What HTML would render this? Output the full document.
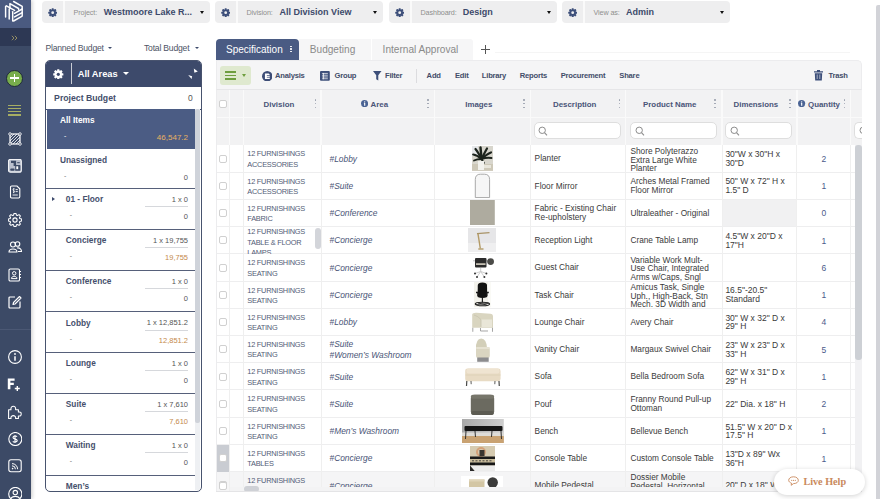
<!DOCTYPE html><html><head><meta charset='utf-8'><style>
*{box-sizing:border-box;margin:0;padding:0}
html,body{width:880px;height:499px;overflow:hidden;background:#fff;font-family:"Liberation Sans",sans-serif;color:#3d4a6b}
.abs{position:absolute}
.sb{position:absolute;left:0;top:0;width:31px;height:499px;background:#3c4a66;box-shadow:1px 0 4px rgba(0,0,0,.22)}
.pill{position:absolute;top:1px;height:22px;width:168px;background:#eeeeef;border-radius:4px}
.pill .gd{position:absolute;left:21px;top:0;width:1.5px;height:22px;background:#fafafa}
.pill .lab{position:absolute;top:7.3px;font-size:7.2px;letter-spacing:-0.1px;color:#8e8e8e;white-space:nowrap}
.pill .val{position:absolute;top:5.5px;font-size:9px;font-weight:bold;color:#3d4a6b;white-space:nowrap}
.pill .car{position:absolute;top:9.8px;width:0;height:0;border-left:2.8px solid transparent;border-right:2.8px solid transparent;border-top:3.3px solid #111}
.t{position:absolute;white-space:nowrap}
.row{position:absolute;left:216px;width:646px;height:27.3px;border-bottom:1px solid #ececec;background:#fff}
.cell{position:absolute;top:0;height:100%;border-right:1px solid #ececec}
.div{font-size:7.4px;color:#525c76;line-height:10.4px;letter-spacing:-0.25px}
.area{font-size:8.4px;font-style:italic;color:#4a5577;line-height:10.5px}
.desc{font-size:8.3px;color:#3a3a3a;line-height:8.9px}
.dm{font-size:8.5px}
.qty{font-size:8.5px;color:#4a5a8a}
.chk{position:absolute;width:8px;height:8px;border:1px solid #d0d0d0;border-radius:2px;background:#fff}
.prow{position:absolute;left:46px;width:149px;border-bottom:1px solid #3d4a6b}
.pn{position:absolute;font-size:8.3px;font-weight:bold;color:#444e6b;white-space:nowrap}
.pm{position:absolute;font-size:7.2px;color:#555;white-space:nowrap;text-align:right}
</style></head><body><div class='sb'><div class='abs' style='left:0;top:0;width:31px;height:28px;background:#4a5a80'></div><div class='abs' style='left:0;top:28px;width:31px;height:17.5px;background:#2d3854'></div><svg class='abs' style='left:0;top:0' width='31' height='28' viewBox='0 0 31 28'>
<g fill='none' stroke='#fff' stroke-width='1.45' stroke-linecap='round' stroke-linejoin='round'>
<path d='M5.6 16.9 V6.6 L6.4 5.8 L14.6 10.4'/>
<path d='M9.2 19 V9 L10 8.4 L9.9 3.6 L18.6 8.5 V9.5'/>
<path d='M12.7 21 V11.6'/>
<path d='M13.6 1.5 L22.2 6.4 V16.1 L13.6 21'/>
<path d='M14.5 13.3 L22.2 9'/>
<path d='M14.5 16.9 L22.2 12.6'/>
</g></svg><svg class='abs' style='left:11px;top:34.8px' width='7.5' height='6' viewBox='0 0 7.5 6'><path d='M.8 .8 L3 3 L.8 5.2 M3.8 .8 L6 3 L3.8 5.2' fill='none' stroke='#948d63' stroke-width='1'/></svg><div class='abs' style='left:6px;top:69.5px;width:17px;height:17px;border-radius:50%;background:#78ad4c;border:1px solid #1f283b'></div><div class='abs' style='left:10.2px;top:77.3px;width:8.6px;height:1.4px;background:#fff'></div><div class='abs' style='left:13.8px;top:73.7px;width:1.4px;height:8.6px;background:#fff'></div><div class='abs' style='left:8px;top:104.5px;width:13px;height:1.3px;background:#a6ad63'></div><div class='abs' style='left:8px;top:107.8px;width:13px;height:1.3px;background:#a6ad63'></div><div class='abs' style='left:8px;top:111px;width:13px;height:1.3px;background:#a6ad63'></div><div class='abs' style='left:8px;top:114.3px;width:13px;height:1.3px;background:#a6ad63'></div><svg class='abs' style='left:7.5px;top:131.7px' width='14' height='14' viewBox='0 0 14 14'><rect x='2' y='2' width='10' height='10' fill='none' stroke='#fff' stroke-width='1.2'/><path d='M2 6 L6 2 M2 9 L9 2 M2 12 L12 2 M5 12 L12 5 M8 12 L12 8' stroke='#fff' stroke-width='.8'/><circle cx='2' cy='2' r='1.3' fill='#3c4a66' stroke='#fff' stroke-width='.8'/><circle cx='12' cy='2' r='1.3' fill='#3c4a66' stroke='#fff' stroke-width='.8'/><circle cx='2' cy='12' r='1.3' fill='#3c4a66' stroke='#fff' stroke-width='.8'/><circle cx='12' cy='12' r='1.3' fill='#3c4a66' stroke='#fff' stroke-width='.8'/></svg><svg class='abs' style='left:7.5px;top:158.7px' width='14' height='14' viewBox='0 0 14 14'><rect x='0.5' y='0.3' width='12.8' height='12.9' rx='2' fill='#b9bfcd'/><rect x='0.5' y='0.3' width='12.8' height='12.9' rx='2' fill='none' stroke='#f0f1f4' stroke-width='1.2'/><path d='M3 1.7 H8.1 V6.9 H5.6 V4 H3 Z' fill='#3c4a66'/><rect x='9.2' y='3.2' width='2.6' height='1' fill='#3c4a66'/><rect x='7.2' y='6.1' width='5.2' height='5.7' rx='.6' fill='#3c4a66'/><rect x='8.3' y='7.3' width='1.9' height='2.9' fill='#fff'/><rect x='2.2' y='9.6' width='4.4' height='2.1' rx='1' fill='#3c4a66'/></svg><svg class='abs' style='left:7.5px;top:185.1px' width='14' height='14' viewBox='0 0 14 14'><path d='M2.5 2.2 Q2.5 1 3.7 1 H9 L11.8 3.8 V11.8 Q11.8 13 10.6 13 H3.7 Q2.5 13 2.5 11.8 Z' fill='none' stroke='#fff' stroke-width='1.1'/><path d='M6.2 3.6 C5 3.6 4.6 5.2 5.6 5.6 C6.8 6 6.6 7.6 5.2 7.5 M5.8 3 V8.2' fill='none' stroke='#fff' stroke-width='.8'/><path d='M7.6 4.6 H9.8 M7.6 6.6 H9.8 M4.6 10 H9.8' stroke='#fff' stroke-width='.9'/></svg><svg class='abs' style='left:7.5px;top:212.8px' width='14' height='14' viewBox='0 0 14 14'><path d='M11.78 5.54 L13.63 6.06 L13.63 7.94 L11.78 8.46 L11.42 9.35 L12.36 11.02 L11.02 12.36 L9.35 11.42 L8.46 11.78 L7.94 13.63 L6.06 13.63 L5.54 11.78 L4.65 11.42 L2.98 12.36 L1.64 11.02 L2.58 9.35 L2.22 8.46 L0.37 7.94 L0.37 6.06 L2.22 5.54 L2.58 4.65 L1.64 2.98 L2.98 1.64 L4.65 2.58 L5.54 2.22 L6.06 0.37 L7.94 0.37 L8.46 2.22 L9.35 2.58 L11.02 1.64 L12.36 2.98 L11.42 4.65 Z' fill='none' stroke='#fff' stroke-width='1.05' stroke-linejoin='round'/><circle cx='7' cy='7' r='2.1' fill='none' stroke='#fff' stroke-width='1.1'/></svg><svg class='abs' style='left:7.5px;top:240.2px' width='14' height='14' viewBox='0 0 14 14'><circle cx='5' cy='4.5' r='2.5' fill='none' stroke='#fff' stroke-width='1.1'/><circle cx='9.5' cy='4' r='2.3' fill='none' stroke='#fff' stroke-width='1.1'/><path d='M1 12 C1 8 9 8 9 12 Z M9 8 C11 7.5 13.5 8.5 13.5 11.5 L10 11.5' fill='none' stroke='#fff' stroke-width='1.1'/></svg><svg class='abs' style='left:7.5px;top:267.9px' width='14' height='14' viewBox='0 0 14 14'><rect x='1' y='1' width='10.5' height='12' rx='1.3' fill='none' stroke='#fff' stroke-width='1.1'/><circle cx='6.2' cy='5.3' r='1.7' fill='none' stroke='#fff' stroke-width='1'/><path d='M3.4 10.6 C3.4 7.6 9 7.6 9 10.6 Z' fill='none' stroke='#fff' stroke-width='1'/><path d='M11.5 3.5 H13 M11.5 6.5 H13 M11.5 9.5 H13' stroke='#fff' stroke-width='1'/></svg><svg class='abs' style='left:7.5px;top:295.0px' width='14' height='14' viewBox='0 0 14 14'><path d='M12 6.5 V12 Q12 13 11 13 H2 Q1 13 1 12 V3 Q1 2 2 2 H7' fill='none' stroke='#fff' stroke-width='1.2'/><path d='M5 9.5 L5.5 7.5 L11.5 1.5 L13 3 L7 9 Z' fill='none' stroke='#fff' stroke-width='1.1' stroke-linejoin='round'/></svg><svg class='abs' style='left:7.5px;top:350.3px' width='14' height='14' viewBox='0 0 14 14'><circle cx='7' cy='7' r='6.4' fill='none' stroke='#fff' stroke-width='1.1'/><path d='M7 6.2 V10.8' stroke='#fff' stroke-width='1.5'/><circle cx='7' cy='4' r='.9' fill='#fff'/></svg><svg class='abs' style='left:7.5px;top:404.5px' width='14' height='14' viewBox='0 0 14 14'><path d='M0.6 13.6 V4.8 H3 C2.6 2.2 4 1.2 5.3 1.2 C6.6 1.2 8 2.2 7.6 4.8 H10.4 V7 C12.8 6.6 13.2 8 13.2 9 C13.2 10 12.8 11.4 10.4 11 V13.6 H7.6 C8 11.4 6.6 10.6 5.3 10.6 C4 10.6 2.6 11.4 3 13.6 Z' fill='none' stroke='#fff' stroke-width='1.1' stroke-linejoin='round'/></svg><svg class='abs' style='left:7.5px;top:432.0px' width='14' height='14' viewBox='0 0 14 14'><circle cx='7.3' cy='7' r='6.5' fill='none' stroke='#fff' stroke-width='1.1'/><path d='M9 4.6 C8.5 3.8 5 3.5 5 5.4 C5 7.3 9.2 6.5 9.2 8.6 C9.2 10.5 5.6 10.3 4.8 9.3 M7 3 V11' fill='none' stroke='#fff' stroke-width='1.1'/></svg><svg class='abs' style='left:7.5px;top:459.0px' width='14' height='14' viewBox='0 0 14 14'><rect x='0.8' y='0.7' width='12.4' height='12' rx='2.2' fill='none' stroke='#fff' stroke-width='1.1'/><path d='M4 4.6 A5.6 5.6 0 0 1 9.6 10.2 M4 6.8 A3.4 3.4 0 0 1 7.4 10.2' fill='none' stroke='#fff' stroke-width='1'/><circle cx='4.6' cy='9.6' r='.8' fill='#fff'/></svg><svg class='abs' style='left:7.5px;top:487.0px' width='14' height='14' viewBox='0 0 14 14'><circle cx='7.3' cy='7' r='6.6' fill='none' stroke='#fff' stroke-width='1.1'/><circle cx='7.3' cy='5.6' r='2.2' fill='none' stroke='#fff' stroke-width='1.1'/><path d='M3 11.6 C4 8.6 10.6 8.6 11.6 11.6' fill='none' stroke='#fff' stroke-width='1.1'/></svg><svg class='abs' style='left:0;top:370px' width='31' height='25' viewBox='0 370 31 25'><path d='M7.8 389.3 V378.5 H14.6 V380.8 H10.4 V382.8 H13.8 V385 H10.4 V389.3 Z' fill='#fff'/><path d='M17.3 386 V391 M14.8 388.5 H19.8' stroke='#fff' stroke-width='1.4'/></svg><div class='abs' style='left:0;top:329px;width:31px;height:1px;background:#4b5874'></div></div><div class='pill' style='left:42px'><svg class='abs' style='left:5.9px;top:6.6px' width='9.4' height='9.4' viewBox='0 0 10 10'><rect x='3.9' y='0.2' width='2.2' height='2.4' rx='.5' fill='#3d4f7a' transform='rotate(0 5 5)'/><rect x='3.9' y='0.2' width='2.2' height='2.4' rx='.5' fill='#3d4f7a' transform='rotate(45 5 5)'/><rect x='3.9' y='0.2' width='2.2' height='2.4' rx='.5' fill='#3d4f7a' transform='rotate(90 5 5)'/><rect x='3.9' y='0.2' width='2.2' height='2.4' rx='.5' fill='#3d4f7a' transform='rotate(135 5 5)'/><rect x='3.9' y='0.2' width='2.2' height='2.4' rx='.5' fill='#3d4f7a' transform='rotate(180 5 5)'/><rect x='3.9' y='0.2' width='2.2' height='2.4' rx='.5' fill='#3d4f7a' transform='rotate(225 5 5)'/><rect x='3.9' y='0.2' width='2.2' height='2.4' rx='.5' fill='#3d4f7a' transform='rotate(270 5 5)'/><rect x='3.9' y='0.2' width='2.2' height='2.4' rx='.5' fill='#3d4f7a' transform='rotate(315 5 5)'/><circle cx='5' cy='5' r='3.5' fill='#3d4f7a'/><circle cx='5' cy='5' r='1.5' fill='#eeeeef'/></svg><div class='gd'></div><div class='lab' style='left:31.5px'>Project:</div><div class='val' style='left:61.75px'>Westmoore Lake R...</div><div class='car' style='left:157.5px'></div></div><div class='pill' style='left:215px'><svg class='abs' style='left:5.9px;top:6.6px' width='9.4' height='9.4' viewBox='0 0 10 10'><rect x='3.9' y='0.2' width='2.2' height='2.4' rx='.5' fill='#3d4f7a' transform='rotate(0 5 5)'/><rect x='3.9' y='0.2' width='2.2' height='2.4' rx='.5' fill='#3d4f7a' transform='rotate(45 5 5)'/><rect x='3.9' y='0.2' width='2.2' height='2.4' rx='.5' fill='#3d4f7a' transform='rotate(90 5 5)'/><rect x='3.9' y='0.2' width='2.2' height='2.4' rx='.5' fill='#3d4f7a' transform='rotate(135 5 5)'/><rect x='3.9' y='0.2' width='2.2' height='2.4' rx='.5' fill='#3d4f7a' transform='rotate(180 5 5)'/><rect x='3.9' y='0.2' width='2.2' height='2.4' rx='.5' fill='#3d4f7a' transform='rotate(225 5 5)'/><rect x='3.9' y='0.2' width='2.2' height='2.4' rx='.5' fill='#3d4f7a' transform='rotate(270 5 5)'/><rect x='3.9' y='0.2' width='2.2' height='2.4' rx='.5' fill='#3d4f7a' transform='rotate(315 5 5)'/><circle cx='5' cy='5' r='3.5' fill='#3d4f7a'/><circle cx='5' cy='5' r='1.5' fill='#eeeeef'/></svg><div class='gd'></div><div class='lab' style='left:31.5px'>Division:</div><div class='val' style='left:64.60000000000002px'>All Division View</div><div class='car' style='left:157.5px'></div></div><div class='pill' style='left:389px'><svg class='abs' style='left:5.9px;top:6.6px' width='9.4' height='9.4' viewBox='0 0 10 10'><rect x='3.9' y='0.2' width='2.2' height='2.4' rx='.5' fill='#3d4f7a' transform='rotate(0 5 5)'/><rect x='3.9' y='0.2' width='2.2' height='2.4' rx='.5' fill='#3d4f7a' transform='rotate(45 5 5)'/><rect x='3.9' y='0.2' width='2.2' height='2.4' rx='.5' fill='#3d4f7a' transform='rotate(90 5 5)'/><rect x='3.9' y='0.2' width='2.2' height='2.4' rx='.5' fill='#3d4f7a' transform='rotate(135 5 5)'/><rect x='3.9' y='0.2' width='2.2' height='2.4' rx='.5' fill='#3d4f7a' transform='rotate(180 5 5)'/><rect x='3.9' y='0.2' width='2.2' height='2.4' rx='.5' fill='#3d4f7a' transform='rotate(225 5 5)'/><rect x='3.9' y='0.2' width='2.2' height='2.4' rx='.5' fill='#3d4f7a' transform='rotate(270 5 5)'/><rect x='3.9' y='0.2' width='2.2' height='2.4' rx='.5' fill='#3d4f7a' transform='rotate(315 5 5)'/><circle cx='5' cy='5' r='3.5' fill='#3d4f7a'/><circle cx='5' cy='5' r='1.5' fill='#eeeeef'/></svg><div class='gd'></div><div class='lab' style='left:31.5px'>Dashboard:</div><div class='val' style='left:73.80000000000001px'>Design</div><div class='car' style='left:157.5px'></div></div><div class='pill' style='left:562px'><svg class='abs' style='left:5.9px;top:6.6px' width='9.4' height='9.4' viewBox='0 0 10 10'><rect x='3.9' y='0.2' width='2.2' height='2.4' rx='.5' fill='#3d4f7a' transform='rotate(0 5 5)'/><rect x='3.9' y='0.2' width='2.2' height='2.4' rx='.5' fill='#3d4f7a' transform='rotate(45 5 5)'/><rect x='3.9' y='0.2' width='2.2' height='2.4' rx='.5' fill='#3d4f7a' transform='rotate(90 5 5)'/><rect x='3.9' y='0.2' width='2.2' height='2.4' rx='.5' fill='#3d4f7a' transform='rotate(135 5 5)'/><rect x='3.9' y='0.2' width='2.2' height='2.4' rx='.5' fill='#3d4f7a' transform='rotate(180 5 5)'/><rect x='3.9' y='0.2' width='2.2' height='2.4' rx='.5' fill='#3d4f7a' transform='rotate(225 5 5)'/><rect x='3.9' y='0.2' width='2.2' height='2.4' rx='.5' fill='#3d4f7a' transform='rotate(270 5 5)'/><rect x='3.9' y='0.2' width='2.2' height='2.4' rx='.5' fill='#3d4f7a' transform='rotate(315 5 5)'/><circle cx='5' cy='5' r='3.5' fill='#3d4f7a'/><circle cx='5' cy='5' r='1.5' fill='#eeeeef'/></svg><div class='gd'></div><div class='lab' style='left:31.5px'>View as:</div><div class='val' style='left:63.89999999999998px'>Admin</div><div class='car' style='left:157.5px'></div></div><div class='t' style='left:45.4px;top:43px;font-size:8.6px;letter-spacing:-0.2px;color:#4d5466'>Planned Budget</div><div class='abs' style='left:108px;top:47.2px;width:0;height:0;border-left:2.3px solid transparent;border-right:2.3px solid transparent;border-top:2.6px solid #3d4a6b'></div><div class='t' style='left:144px;top:43px;font-size:8.6px;letter-spacing:-0.2px;color:#4d5466'>Total Budget</div><div class='abs' style='left:195px;top:47.2px;width:0;height:0;border-left:2.3px solid transparent;border-right:2.3px solid transparent;border-top:2.6px solid #3d4a6b'></div><div class='abs' style='left:45px;top:59.8px;width:157px;height:432px;border:1.5px solid #48536e;border-radius:5px;overflow:hidden;background:#fff'><div class='abs' style='left:0;top:0;width:157px;height:26px;background:#3d4a6b'></div></div><svg class='abs' style='left:53.4px;top:68.5px' width='10.6' height='10.6' viewBox='0 0 10 10'><rect x='3.9' y='0.2' width='2.2' height='2.4' rx='.5' fill='#fff' transform='rotate(0 5 5)'/><rect x='3.9' y='0.2' width='2.2' height='2.4' rx='.5' fill='#fff' transform='rotate(45 5 5)'/><rect x='3.9' y='0.2' width='2.2' height='2.4' rx='.5' fill='#fff' transform='rotate(90 5 5)'/><rect x='3.9' y='0.2' width='2.2' height='2.4' rx='.5' fill='#fff' transform='rotate(135 5 5)'/><rect x='3.9' y='0.2' width='2.2' height='2.4' rx='.5' fill='#fff' transform='rotate(180 5 5)'/><rect x='3.9' y='0.2' width='2.2' height='2.4' rx='.5' fill='#fff' transform='rotate(225 5 5)'/><rect x='3.9' y='0.2' width='2.2' height='2.4' rx='.5' fill='#fff' transform='rotate(270 5 5)'/><rect x='3.9' y='0.2' width='2.2' height='2.4' rx='.5' fill='#fff' transform='rotate(315 5 5)'/><circle cx='5' cy='5' r='3.5' fill='#fff'/><circle cx='5' cy='5' r='1.5' fill='#3d4a6b'/></svg><div class='abs' style='left:71.3px;top:62.5px;width:1.2px;height:21px;background:#c9ccd4'></div><div class='t' style='left:77.7px;top:68.5px;font-size:9.3px;font-weight:bold;color:#fff'>All Areas</div><div class='abs' style='left:122.5px;top:72.2px;width:0;height:0;border-left:3px solid transparent;border-right:3px solid transparent;border-top:3.2px solid #fff'></div><svg class='abs' style='left:180px;top:60px' width='24' height='28' viewBox='180 60 24 28'><polygon points='193.8,68.6 197.8,71.6 194.4,72.8' fill='#fff'/><polygon points='188.2,74.9 192.1,76.2 191.6,79' fill='#fff'/></svg><div class='pn' style='left:54.1px;top:92.5px;font-size:8.7px'>Project Budget</div><div class='t' style='left:188px;top:92.5px;font-size:8.5px;color:#555'>0</div><div class='abs' style='left:46px;top:108.5px;width:155px;height:1px;background:#3d4a6b'></div><div class='abs' style='left:46.5px;top:109px;width:148px;height:40px;background:#4b5c84'></div><div class='abs' style='left:195px;top:109px;width:5px;height:381px;background:#eef0f3'></div><div class='abs' style='left:195px;top:109px;width:5px;height:314px;background:#cfd3da;border-radius:2px'></div><div class='pn' style='left:60px;top:115px;color:#fff'>All Items</div><div class='t' style='left:64px;top:132px;font-size:7px;color:#fff'>-</div><div class='t' style='right:692px;top:133px;font-size:8px;color:#e8b263'>46,547.2</div><div class='pn' style='left:60px;top:155px;color:#454f6c'>Unassigned</div><div class='t' style='left:64px;top:172px;font-size:7px;color:#777'>-</div><div class='t' style='right:692px;top:173px;font-size:7.5px;color:#555'>0</div><div class='abs' style='left:46px;top:187.79999999999998px;width:149px;height:1.2px;background:#56607a'></div><div class='pn' style='left:65.8px;top:194.2px;color:#454f6c'>01 - Floor</div><div class='abs' style='left:52px;top:197.2px;width:0;height:0;border-top:2.5px solid transparent;border-bottom:2.5px solid transparent;border-left:3px solid #3d4a6b'></div><div class='t' style='left:69.8px;top:211.2px;font-size:7px;color:#777'>-</div><div class='t' style='right:692px;top:212.2px;font-size:7.5px;color:#555'>0</div><div class='t' style='right:692px;top:194.7px;font-size:7.5px;color:#555'>1 x 0</div><div class='abs' style='left:145px;top:206.2px;width:43px;height:1px;background:#d6d8dc'></div><div class='abs' style='left:46px;top:228.6px;width:149px;height:1.2px;background:#56607a'></div><div class='pn' style='left:65.8px;top:235px;color:#454f6c'>Concierge</div><div class='t' style='left:69.8px;top:252px;font-size:7px;color:#777'>-</div><div class='t' style='right:692px;top:253px;font-size:7.5px;color:#c48a4c'>19,755</div><div class='t' style='right:692px;top:235.5px;font-size:7.5px;color:#555'>1 x 19,755</div><div class='abs' style='left:145px;top:247px;width:43px;height:1px;background:#d6d8dc'></div><div class='abs' style='left:46px;top:269.70000000000005px;width:149px;height:1.2px;background:#56607a'></div><div class='pn' style='left:65.8px;top:276.1px;color:#454f6c'>Conference</div><div class='t' style='left:69.8px;top:293.1px;font-size:7px;color:#777'>-</div><div class='t' style='right:692px;top:294.1px;font-size:7.5px;color:#555'>0</div><div class='t' style='right:692px;top:276.6px;font-size:7.5px;color:#555'>1 x 0</div><div class='abs' style='left:145px;top:288.1px;width:43px;height:1px;background:#d6d8dc'></div><div class='abs' style='left:46px;top:311.1px;width:149px;height:1.2px;background:#56607a'></div><div class='pn' style='left:65.8px;top:317.5px;color:#454f6c'>Lobby</div><div class='t' style='left:69.8px;top:334.5px;font-size:7px;color:#777'>-</div><div class='t' style='right:692px;top:335.5px;font-size:7.5px;color:#c48a4c'>12,851.2</div><div class='t' style='right:692px;top:318.0px;font-size:7.5px;color:#555'>1 x 12,851.2</div><div class='abs' style='left:145px;top:329.5px;width:43px;height:1px;background:#d6d8dc'></div><div class='abs' style='left:46px;top:351.8px;width:149px;height:1.2px;background:#56607a'></div><div class='pn' style='left:65.8px;top:358.2px;color:#454f6c'>Lounge</div><div class='t' style='left:69.8px;top:375.2px;font-size:7px;color:#777'>-</div><div class='t' style='right:692px;top:376.2px;font-size:7.5px;color:#555'>0</div><div class='t' style='right:692px;top:358.7px;font-size:7.5px;color:#555'>1 x 0</div><div class='abs' style='left:145px;top:370.2px;width:43px;height:1px;background:#d6d8dc'></div><div class='abs' style='left:46px;top:392.8px;width:149px;height:1.2px;background:#56607a'></div><div class='pn' style='left:65.8px;top:399.2px;color:#454f6c'>Suite</div><div class='t' style='left:69.8px;top:416.2px;font-size:7px;color:#777'>-</div><div class='t' style='right:692px;top:417.2px;font-size:7.5px;color:#c48a4c'>7,610</div><div class='t' style='right:692px;top:399.7px;font-size:7.5px;color:#555'>1 x 7,610</div><div class='abs' style='left:145px;top:411.2px;width:43px;height:1px;background:#d6d8dc'></div><div class='abs' style='left:46px;top:433.90000000000003px;width:149px;height:1.2px;background:#56607a'></div><div class='pn' style='left:65.8px;top:440.3px;color:#454f6c'>Waiting</div><div class='t' style='left:69.8px;top:457.3px;font-size:7px;color:#777'>-</div><div class='t' style='right:692px;top:458.3px;font-size:7.5px;color:#555'>0</div><div class='t' style='right:692px;top:440.8px;font-size:7.5px;color:#555'>1 x 0</div><div class='abs' style='left:145px;top:452.3px;width:43px;height:1px;background:#d6d8dc'></div><div class='abs' style='left:46px;top:474.6px;width:149px;height:1.2px;background:#56607a'></div><div class='pn' style='left:65.8px;top:481px;color:#454f6c'>Men’s</div><div class='abs' style='left:216px;top:38.7px;width:83px;height:21.5px;background:#4a5b83;border-radius:4px 4px 0 0'></div><div class='t' style='left:226px;top:44px;font-size:10px;color:#fff'>Specification</div><div class='abs' style='left:290.3px;top:45.5px;width:1.5px;height:1.5px;background:#fff;border-radius:50%'></div><div class='abs' style='left:290.3px;top:48.1px;width:1.5px;height:1.5px;background:#fff;border-radius:50%'></div><div class='abs' style='left:290.3px;top:50.7px;width:1.5px;height:1.5px;background:#fff;border-radius:50%'></div><div class='abs' style='left:299px;top:38.7px;width:72.4px;height:21.5px;background:#f6f6f7'></div><div class='t' style='left:309.8px;top:44.3px;font-size:10.1px;color:#8a8a8a'>Budgeting</div><div class='abs' style='left:372.4px;top:38.7px;width:101px;height:21.5px;background:#f6f6f7;border-radius:0 3px 0 0'></div><div class='t' style='left:382.6px;top:44.3px;font-size:10.1px;color:#8a8a8a'>Internal Approval</div><div class='abs' style='left:481px;top:49px;width:8.6px;height:1.1px;background:#555'></div><div class='abs' style='left:484.75px;top:45.3px;width:1.1px;height:8.6px;background:#555'></div><div class='abs' style='left:495px;top:51.5px;width:355px;height:1px;background:#f5f5f5'></div><div class='abs' style='left:216px;top:60.2px;width:645.6px;height:30px;background:#f5f5f6;border:1px solid #ececee;border-bottom:1px solid #e6e6e8;border-radius:0 5px 0 0'></div><div class='abs' style='left:220px;top:65.8px;width:31px;height:19px;background:#dfe9cf;border-radius:3px'></div><div class='abs' style='left:224.5px;top:71.2px;width:11.5px;height:1.7px;background:#6e9e3e'></div><div class='abs' style='left:224.5px;top:74.8px;width:11.5px;height:1.7px;background:#6e9e3e'></div><div class='abs' style='left:224.5px;top:78.4px;width:11.5px;height:1.7px;background:#6e9e3e'></div><div class='abs' style='left:241.5px;top:74px;width:0;height:0;border-left:2.7px solid transparent;border-right:2.7px solid transparent;border-top:3px solid #6e9e3e'></div><svg class='abs' style='left:261.8px;top:70.5px' width='10.5' height='10.5' viewBox='0 0 10 10'><circle cx='5' cy='5' r='5' fill='#3d4d76'/><path d='M2.8 2.4 H6.3 L7.4 3.5 V7.6 H2.8 Z' fill='#fff'/><path d='M4.6 4.3 H7.6 M4.6 6 H7.6' stroke='#3d4d76' stroke-width='.7'/></svg><div class='t' style='left:275px;font-size:7.6px;letter-spacing:-0.2px;font-weight:bold;color:#434d69;top:70.6px'>Analysis</div><svg class='abs' style='left:320.2px;top:70.8px' width='9.8' height='9.8' viewBox='0 0 10 10'><rect x='0' y='0' width='10' height='10' rx='1' fill='#3d4f7a'/><path d='M2 2.5 H8 M2 4.3 H8 M2 6.1 H8 M2 7.9 H8 M3.6 2 V8.5' stroke='#fff' stroke-width='.7'/></svg><div class='t' style='left:334.5px;font-size:7.6px;letter-spacing:-0.2px;font-weight:bold;color:#434d69;top:70.6px'>Group</div><svg class='abs' style='left:373px;top:71px' width='8.5' height='9.5' viewBox='0 0 9 10'><path d='M0 0 H9 L5.6 4.5 V10 L3.4 8.8 V4.5 Z' fill='#3d4f7a'/></svg><div class='t' style='left:385px;font-size:7.6px;letter-spacing:-0.2px;font-weight:bold;color:#434d69;top:70.6px'>Filter</div><div class='abs' style='left:415.5px;top:68.5px;width:1px;height:14px;background:#dcdcdf'></div><div class='t' style='left:426.6px;font-size:7.6px;letter-spacing:-0.2px;font-weight:bold;color:#434d69;top:70.6px'>Add</div><div class='t' style='left:455px;font-size:7.6px;letter-spacing:-0.2px;font-weight:bold;color:#434d69;top:70.6px'>Edit</div><div class='t' style='left:481.8px;font-size:7.6px;letter-spacing:-0.2px;font-weight:bold;color:#434d69;top:70.6px'>Library</div><div class='t' style='left:519.8px;font-size:7.6px;letter-spacing:-0.2px;font-weight:bold;color:#434d69;top:70.6px'>Reports</div><div class='t' style='left:560.7px;font-size:7.6px;letter-spacing:-0.2px;font-weight:bold;color:#434d69;top:70.6px'>Procurement</div><div class='t' style='left:619.3px;font-size:7.6px;letter-spacing:-0.2px;font-weight:bold;color:#434d69;top:70.6px'>Share</div><svg class='abs' style='left:814px;top:70px' width='9' height='10.5' viewBox='0 0 9 10.5'><path d='M0 1.3 H9 V2.6 H0 Z M3 0 H6 V1.3 H3 Z M.8 3.2 H8.2 L7.8 10.5 H1.2 Z' fill='#3d4f7a'/><path d='M3.2 4.5 V9 M5.8 4.5 V9' stroke='#f5f5f6' stroke-width='.6'/></svg><div class='t' style='left:828.4px;font-size:7.6px;letter-spacing:-0.2px;font-weight:bold;color:#434d69;top:70.6px'>Trash</div><div class='abs' style='left:216px;top:90px;width:645.6px;height:55.400000000000006px;background:#f2f2f3'></div><div class='abs' style='left:216px;top:116.6px;width:645.6px;height:1.5px;background:#fafafa'></div><div class='abs' style='left:228.95px;top:90px;width:1.5px;height:55.400000000000006px;background:#fafafa'></div><div class='abs' style='left:242.65px;top:90px;width:1.5px;height:55.400000000000006px;background:#fafafa'></div><div class='abs' style='left:320.35px;top:90px;width:1.5px;height:55.400000000000006px;background:#fafafa'></div><div class='abs' style='left:433.85px;top:90px;width:1.5px;height:55.400000000000006px;background:#fafafa'></div><div class='abs' style='left:529.95px;top:90px;width:1.5px;height:55.400000000000006px;background:#fafafa'></div><div class='abs' style='left:624.55px;top:90px;width:1.5px;height:55.400000000000006px;background:#fafafa'></div><div class='abs' style='left:721.25px;top:90px;width:1.5px;height:55.400000000000006px;background:#fafafa'></div><div class='abs' style='left:796.05px;top:90px;width:1.5px;height:55.400000000000006px;background:#fafafa'></div><div class='abs' style='left:849.95px;top:90px;width:1.5px;height:55.400000000000006px;background:#fafafa'></div><div class='chk' style='left:218.5px;top:100.3px'></div><div class='t' style='left:263.6px;font-size:7.9px;font-weight:bold;color:#4a5578;top:99.6px'>Division</div><div class='abs' style='left:314.9px;top:99.0px;width:1.6px;height:1.6px;border-radius:50%;background:#9aa0ae'></div><div class='abs' style='left:314.9px;top:102.9px;width:1.6px;height:1.6px;border-radius:50%;background:#9aa0ae'></div><div class='abs' style='left:314.9px;top:106.8px;width:1.6px;height:1.6px;border-radius:50%;background:#9aa0ae'></div><svg class='abs' style='left:360.7px;top:100.2px' width='7.2' height='7.2' viewBox='0 0 7 7'><circle cx='3.5' cy='3.5' r='3.5' fill='#4a6394'/><path d='M3.6 3 V5.7' stroke='#fff' stroke-width='1.1'/><path d='M2.8 3.1 H3.9' stroke='#fff' stroke-width='.7'/><circle cx='3.6' cy='1.8' r='.6' fill='#fff'/></svg><div class='t' style='left:370.5px;font-size:7.9px;font-weight:bold;color:#4a5578;top:99.6px'>Area</div><div class='abs' style='left:427.4px;top:99.0px;width:1.6px;height:1.6px;border-radius:50%;background:#9aa0ae'></div><div class='abs' style='left:427.4px;top:102.9px;width:1.6px;height:1.6px;border-radius:50%;background:#9aa0ae'></div><div class='abs' style='left:427.4px;top:106.8px;width:1.6px;height:1.6px;border-radius:50%;background:#9aa0ae'></div><div class='t' style='left:465.2px;font-size:7.9px;font-weight:bold;color:#4a5578;top:99.6px'>Images</div><div class='abs' style='left:523.1px;top:99.0px;width:1.6px;height:1.6px;border-radius:50%;background:#9aa0ae'></div><div class='abs' style='left:523.1px;top:102.9px;width:1.6px;height:1.6px;border-radius:50%;background:#9aa0ae'></div><div class='abs' style='left:523.1px;top:106.8px;width:1.6px;height:1.6px;border-radius:50%;background:#9aa0ae'></div><div class='t' style='left:553px;font-size:7.9px;font-weight:bold;color:#4a5578;top:99.6px'>Description</div><div class='abs' style='left:618.6px;top:99.0px;width:1.6px;height:1.6px;border-radius:50%;background:#9aa0ae'></div><div class='abs' style='left:618.6px;top:102.9px;width:1.6px;height:1.6px;border-radius:50%;background:#9aa0ae'></div><div class='abs' style='left:618.6px;top:106.8px;width:1.6px;height:1.6px;border-radius:50%;background:#9aa0ae'></div><div class='t' style='left:643px;font-size:7.9px;font-weight:bold;color:#4a5578;top:99.6px'>Product Name</div><div class='abs' style='left:714.2px;top:99.0px;width:1.6px;height:1.6px;border-radius:50%;background:#9aa0ae'></div><div class='abs' style='left:714.2px;top:102.9px;width:1.6px;height:1.6px;border-radius:50%;background:#9aa0ae'></div><div class='abs' style='left:714.2px;top:106.8px;width:1.6px;height:1.6px;border-radius:50%;background:#9aa0ae'></div><div class='t' style='left:733.5px;font-size:7.9px;font-weight:bold;color:#4a5578;top:99.6px'>Dimensions</div><div class='abs' style='left:789.2px;top:99.0px;width:1.6px;height:1.6px;border-radius:50%;background:#9aa0ae'></div><div class='abs' style='left:789.2px;top:102.9px;width:1.6px;height:1.6px;border-radius:50%;background:#9aa0ae'></div><div class='abs' style='left:789.2px;top:106.8px;width:1.6px;height:1.6px;border-radius:50%;background:#9aa0ae'></div><svg class='abs' style='left:798.4px;top:100.2px' width='7.2' height='7.2' viewBox='0 0 7 7'><circle cx='3.5' cy='3.5' r='3.5' fill='#4a6394'/><path d='M3.6 3 V5.7' stroke='#fff' stroke-width='1.1'/><path d='M2.8 3.1 H3.9' stroke='#fff' stroke-width='.7'/><circle cx='3.6' cy='1.8' r='.6' fill='#fff'/></svg><div class='t' style='left:808px;font-size:7.9px;font-weight:bold;color:#4a5578;top:99.6px'>Quantity</div><div class='abs' style='left:843.8000000000001px;top:99.0px;width:1.6px;height:1.6px;border-radius:50%;background:#9aa0ae'></div><div class='abs' style='left:843.8000000000001px;top:102.9px;width:1.6px;height:1.6px;border-radius:50%;background:#9aa0ae'></div><div class='abs' style='left:843.8000000000001px;top:106.8px;width:1.6px;height:1.6px;border-radius:50%;background:#9aa0ae'></div><div class='abs' style='left:533.5px;top:122.4px;width:87.70000000000005px;height:17px;background:#fff;border:1px solid #dedede;border-radius:5px'><svg class='abs' style='left:3.8px;top:2.9px' width='10' height='10' viewBox='0 0 10 10'><circle cx='4.2' cy='4.3' r='3.2' fill='none' stroke='#8c8c8c' stroke-width='1'/><path d='M6.5 6.7 L9 9.3' stroke='#8c8c8c' stroke-width='1.1'/></svg></div><div class='abs' style='left:629.8px;top:122.4px;width:87.0px;height:17px;background:#fff;border:1px solid #dedede;border-radius:5px'><svg class='abs' style='left:3.8px;top:2.9px' width='10' height='10' viewBox='0 0 10 10'><circle cx='4.2' cy='4.3' r='3.2' fill='none' stroke='#8c8c8c' stroke-width='1'/><path d='M6.5 6.7 L9 9.3' stroke='#8c8c8c' stroke-width='1.1'/></svg></div><div class='abs' style='left:725px;top:122.4px;width:67px;height:17px;background:#fff;border:1px solid #dedede;border-radius:5px'><svg class='abs' style='left:3.8px;top:2.9px' width='10' height='10' viewBox='0 0 10 10'><circle cx='4.2' cy='4.3' r='3.2' fill='none' stroke='#8c8c8c' stroke-width='1'/><path d='M6.5 6.7 L9 9.3' stroke='#8c8c8c' stroke-width='1.1'/></svg></div><div class='abs' style='left:854.3px;top:122.4px;width:7.3px;height:17px;background:#fff;border:1px solid #dedede;border-right:none;border-radius:5px 0 0 5px;overflow:hidden'><svg class='abs' style='left:3.8px;top:2.9px' width='10' height='10' viewBox='0 0 10 10'><circle cx='4.2' cy='4.3' r='3.2' fill='none' stroke='#8c8c8c' stroke-width='1'/><path d='M6.5 6.7 L9 9.3' stroke='#8c8c8c' stroke-width='1.1'/></svg></div><div class='abs' style='left:216px;top:145.4px;width:645.6px;height:346.1px;overflow:hidden;background:#fff'><div class='abs' style='left:0;top:0.0px;width:645.6px;height:27.23px;overflow:hidden'><div class='abs' style='left:0;top:26.23px;width:645.6px;height:1px;background:#eeeeef'></div><div class='abs' style='left:13.199999999999989px;top:0;width:1px;height:27.23px;background:#efefef'></div><div class='abs' style='left:26.900000000000006px;top:0;width:1px;height:27.23px;background:#efefef'></div><div class='abs' style='left:104.60000000000002px;top:0;width:1px;height:27.23px;background:#efefef'></div><div class='abs' style='left:218.10000000000002px;top:0;width:1px;height:27.23px;background:#efefef'></div><div class='abs' style='left:314.20000000000005px;top:0;width:1px;height:27.23px;background:#efefef'></div><div class='abs' style='left:408.79999999999995px;top:0;width:1px;height:27.23px;background:#efefef'></div><div class='abs' style='left:505.5px;top:0;width:1px;height:27.23px;background:#efefef'></div><div class='abs' style='left:580.3px;top:0;width:1px;height:27.23px;background:#efefef'></div><div class='abs' style='left:634.2px;top:0;width:1px;height:27.23px;background:#efefef'></div><div class='chk' style='left:3.2px;top:9.315000000000001px'></div><div class='t div' style='left:31.30000000000001px;top:4.015000000000001px;line-height:10.4px'>12 FURNISHINGS<br>ACCESSORIES</div><div class='t area' style='left:113.5px;top:8.365px;line-height:10.5px'>#Lobby</div><div class='t desc' style='left:318.6px;top:9.065000000000001px;line-height:9.1px'>Planter</div><div class='t desc' style='left:414.4px;top:1.3149999999999995px;line-height:8.8px'>Shore Polyterazzo<br>Extra Large White<br>Planter</div><div class='t desc dm' style='left:509.4px;top:4.8149999999999995px;line-height:8.8px'>30&quot;W x 30&quot;H x<br>30&quot;D</div><div class='t qty' style='left:605.5px;top:8.615px'>2</div><svg class='abs' style='left:255.8px;top:0.5999999999999943px' width='21.2' height='24.8' viewBox='0 0 21.2 24.8'><rect width='21.2' height='24.8' fill='#d8d6cd'/><rect width='6' height='10' fill='#e6e8ea'/><rect x='0' y='18' width='21.2' height='6.8' fill='#cdc8b8'/><g stroke='#1d241d' stroke-linecap='round' fill='none'><path d='M9.5 13 Q5 9 1.2 8.5' stroke-width='2.2'/><path d='M9.5 13 Q6 6 3.5 3' stroke-width='2.2'/><path d='M9.5 13 Q9 6 8.5 1.5' stroke-width='2.4'/><path d='M9.5 13 Q13 6 15 2.5' stroke-width='2.2'/><path d='M9.5 13 Q15 8 19 6.5' stroke-width='2.2'/><path d='M9.5 13 Q15 11 19.5 12' stroke-width='2'/><path d='M9.5 13 Q5 13 2 14.5' stroke-width='1.8'/><path d='M9.5 13 L12 17' stroke-width='1.6'/></g><rect x='6' y='15' width='6' height='9' fill='#f2f2ee'/><rect x='12' y='19' width='7' height='3' fill='#e8e6dc'/></svg></div><div class='abs' style='left:0;top:27.23px;width:645.6px;height:27.23px;overflow:hidden'><div class='abs' style='left:0;top:26.23px;width:645.6px;height:1px;background:#eeeeef'></div><div class='abs' style='left:13.199999999999989px;top:0;width:1px;height:27.23px;background:#efefef'></div><div class='abs' style='left:26.900000000000006px;top:0;width:1px;height:27.23px;background:#efefef'></div><div class='abs' style='left:104.60000000000002px;top:0;width:1px;height:27.23px;background:#efefef'></div><div class='abs' style='left:218.10000000000002px;top:0;width:1px;height:27.23px;background:#efefef'></div><div class='abs' style='left:314.20000000000005px;top:0;width:1px;height:27.23px;background:#efefef'></div><div class='abs' style='left:408.79999999999995px;top:0;width:1px;height:27.23px;background:#efefef'></div><div class='abs' style='left:505.5px;top:0;width:1px;height:27.23px;background:#efefef'></div><div class='abs' style='left:580.3px;top:0;width:1px;height:27.23px;background:#efefef'></div><div class='abs' style='left:634.2px;top:0;width:1px;height:27.23px;background:#efefef'></div><div class='chk' style='left:3.2px;top:9.315000000000001px'></div><div class='t div' style='left:31.30000000000001px;top:4.015000000000001px;line-height:10.4px'>12 FURNISHINGS<br>ACCESSORIES</div><div class='t area' style='left:113.5px;top:8.365px;line-height:10.5px'>#Suite</div><div class='t desc' style='left:318.6px;top:9.065000000000001px;line-height:9.1px'>Floor Mirror</div><div class='t desc' style='left:414.4px;top:4.8149999999999995px;line-height:8.8px'>Arches Metal Framed<br>Floor Mirror</div><div class='t desc dm' style='left:509.4px;top:4.8149999999999995px;line-height:8.8px'>50&quot; W x 72&quot; H x<br>1.5&quot; D</div><div class='t qty' style='left:605.5px;top:8.615px'>1</div><svg class='abs' style='left:257.75px;top:0.5699999999999825px' width='16.9' height='25.2' viewBox='0 0 16.9 25.2'><rect width='16.9' height='25.2' fill='#fff'/><path d='M1.3 24.6 V6.5 Q1.3 1.2 6.5 1.2 H10.4 Q15.6 1.2 15.6 6.5 V24.6 Z' fill='#f6f6f6' stroke='#a0a0a0' stroke-width='.9'/></svg></div><div class='abs' style='left:0;top:54.46px;width:645.6px;height:27.23px;overflow:hidden'><div class='abs' style='left:0;top:26.23px;width:645.6px;height:1px;background:#eeeeef'></div><div class='abs' style='left:506.5px;top:0;width:73.79999999999995px;height:26.23px;background:#f1f1f2'></div><div class='abs' style='left:13.199999999999989px;top:0;width:1px;height:27.23px;background:#efefef'></div><div class='abs' style='left:26.900000000000006px;top:0;width:1px;height:27.23px;background:#efefef'></div><div class='abs' style='left:104.60000000000002px;top:0;width:1px;height:27.23px;background:#efefef'></div><div class='abs' style='left:218.10000000000002px;top:0;width:1px;height:27.23px;background:#efefef'></div><div class='abs' style='left:314.20000000000005px;top:0;width:1px;height:27.23px;background:#efefef'></div><div class='abs' style='left:408.79999999999995px;top:0;width:1px;height:27.23px;background:#efefef'></div><div class='abs' style='left:505.5px;top:0;width:1px;height:27.23px;background:#efefef'></div><div class='abs' style='left:580.3px;top:0;width:1px;height:27.23px;background:#efefef'></div><div class='abs' style='left:634.2px;top:0;width:1px;height:27.23px;background:#efefef'></div><div class='chk' style='left:3.2px;top:9.315000000000001px'></div><div class='t div' style='left:31.30000000000001px;top:4.015000000000001px;line-height:10.4px'>12 FURNISHINGS<br>FABRIC</div><div class='t area' style='left:113.5px;top:8.365px;line-height:10.5px'>#Conference</div><div class='t desc' style='left:318.6px;top:4.515000000000001px;line-height:9.1px'>Fabric - Existing Chair<br>Re-upholstery</div><div class='t desc' style='left:414.4px;top:9.215px;line-height:8.8px'>Ultraleather - Original</div><div class='t qty' style='left:605.5px;top:8.615px'>0</div><svg class='abs' style='left:253.89999999999998px;top:0.23999999999998778px' width='24.8' height='25.2' viewBox='0 0 24.8 25.2'><rect width='24.8' height='25.2' fill='#aeab9f'/></svg></div><div class='abs' style='left:0;top:81.69px;width:645.6px;height:27.23px;overflow:hidden'><div class='abs' style='left:0;top:26.23px;width:645.6px;height:1px;background:#eeeeef'></div><div class='abs' style='left:13.199999999999989px;top:0;width:1px;height:27.23px;background:#efefef'></div><div class='abs' style='left:26.900000000000006px;top:0;width:1px;height:27.23px;background:#efefef'></div><div class='abs' style='left:104.60000000000002px;top:0;width:1px;height:27.23px;background:#efefef'></div><div class='abs' style='left:218.10000000000002px;top:0;width:1px;height:27.23px;background:#efefef'></div><div class='abs' style='left:314.20000000000005px;top:0;width:1px;height:27.23px;background:#efefef'></div><div class='abs' style='left:408.79999999999995px;top:0;width:1px;height:27.23px;background:#efefef'></div><div class='abs' style='left:505.5px;top:0;width:1px;height:27.23px;background:#efefef'></div><div class='abs' style='left:580.3px;top:0;width:1px;height:27.23px;background:#efefef'></div><div class='abs' style='left:634.2px;top:0;width:1px;height:27.23px;background:#efefef'></div><div class='chk' style='left:3.2px;top:9.315000000000001px'></div><div class='t div' style='left:31.30000000000001px;top:0.3149999999999977px;line-height:10.4px'>12 FURNISHINGS<br>TABLE &amp; FLOOR<br>LAMPS</div><div class='t area' style='left:113.5px;top:8.365px;line-height:10.5px'>#Concierge</div><div class='t desc' style='left:318.6px;top:9.065000000000001px;line-height:9.1px'>Reception Light</div><div class='t desc' style='left:414.4px;top:9.215px;line-height:8.8px'>Crane Table Lamp</div><div class='t desc dm' style='left:509.4px;top:4.8149999999999995px;line-height:8.8px'>4.5&quot;W x 20&quot;D x<br>17&quot;H</div><div class='t qty' style='left:605.5px;top:8.615px'>1</div><svg class='abs' style='left:252.2px;top:0.6099999999999852px' width='28.1' height='24.8' viewBox='0 0 28.1 24.8'><rect width='28.1' height='24.8' fill='#e6e6e8'/><rect y='15' width='28.1' height='9.8' fill='#efeff0'/><path d='M9 5.6 L21.5 4.6' stroke='#a99468' stroke-width='1.3' fill='none'/><path d='M10 5.8 L12.3 20.5' stroke='#b39a66' stroke-width='1.4' fill='none'/><path d='M10.3 21 L15.5 21' stroke='#b39a66' stroke-width='1.4'/></svg></div><div class='abs' style='left:0;top:108.92px;width:645.6px;height:27.23px;overflow:hidden'><div class='abs' style='left:0;top:26.23px;width:645.6px;height:1px;background:#eeeeef'></div><div class='abs' style='left:13.199999999999989px;top:0;width:1px;height:27.23px;background:#efefef'></div><div class='abs' style='left:26.900000000000006px;top:0;width:1px;height:27.23px;background:#efefef'></div><div class='abs' style='left:104.60000000000002px;top:0;width:1px;height:27.23px;background:#efefef'></div><div class='abs' style='left:218.10000000000002px;top:0;width:1px;height:27.23px;background:#efefef'></div><div class='abs' style='left:314.20000000000005px;top:0;width:1px;height:27.23px;background:#efefef'></div><div class='abs' style='left:408.79999999999995px;top:0;width:1px;height:27.23px;background:#efefef'></div><div class='abs' style='left:505.5px;top:0;width:1px;height:27.23px;background:#efefef'></div><div class='abs' style='left:580.3px;top:0;width:1px;height:27.23px;background:#efefef'></div><div class='abs' style='left:634.2px;top:0;width:1px;height:27.23px;background:#efefef'></div><div class='chk' style='left:3.2px;top:9.315000000000001px'></div><div class='t div' style='left:31.30000000000001px;top:4.015000000000001px;line-height:10.4px'>12 FURNISHINGS<br>SEATING</div><div class='t area' style='left:113.5px;top:8.365px;line-height:10.5px'>#Concierge</div><div class='t desc' style='left:318.6px;top:9.065000000000001px;line-height:9.1px'>Guest Chair</div><div class='t desc' style='left:414.4px;top:1.3149999999999995px;line-height:8.8px'>Variable Work Mult-<br>Use Chair, Integrated<br>Arms w/Caps, Sngl</div><div class='t qty' style='left:605.5px;top:8.615px'>6</div><svg class='abs' style='left:257px;top:2.8799999999999812px' width='20.5' height='21.6' viewBox='0 0 20.5 21.6'><rect width='20.5' height='21.6' fill='#fff'/><path d='M0 3.8 H15.5' stroke='#999' stroke-width='.6'/><rect x='2' y='1' width='11.5' height='9.5' rx='1' fill='#2b2b2b'/><rect x='3' y='6.3' width='9.5' height='1.6' fill='#d6d1c2'/><circle cx='17.6' cy='4.6' r='3.4' fill='#4b4b48'/><path d='M7.7 11 V14.5 M7.7 14.5 L2 16.5 M7.7 14.5 L13.4 16.5 M7.7 14.5 L4 20 M7.7 14.5 L11.4 20' stroke='#c8c8c8' stroke-width='.9'/><circle cx='2' cy='16.5' r='1' fill='#333'/><circle cx='13.4' cy='16.5' r='1' fill='#333'/><circle cx='4' cy='20' r='1' fill='#333'/><circle cx='11.4' cy='20' r='1' fill='#333'/></svg></div><div class='abs' style='left:0;top:136.15px;width:645.6px;height:27.23px;overflow:hidden'><div class='abs' style='left:0;top:26.23px;width:645.6px;height:1px;background:#eeeeef'></div><div class='abs' style='left:13.199999999999989px;top:0;width:1px;height:27.23px;background:#efefef'></div><div class='abs' style='left:26.900000000000006px;top:0;width:1px;height:27.23px;background:#efefef'></div><div class='abs' style='left:104.60000000000002px;top:0;width:1px;height:27.23px;background:#efefef'></div><div class='abs' style='left:218.10000000000002px;top:0;width:1px;height:27.23px;background:#efefef'></div><div class='abs' style='left:314.20000000000005px;top:0;width:1px;height:27.23px;background:#efefef'></div><div class='abs' style='left:408.79999999999995px;top:0;width:1px;height:27.23px;background:#efefef'></div><div class='abs' style='left:505.5px;top:0;width:1px;height:27.23px;background:#efefef'></div><div class='abs' style='left:580.3px;top:0;width:1px;height:27.23px;background:#efefef'></div><div class='abs' style='left:634.2px;top:0;width:1px;height:27.23px;background:#efefef'></div><div class='chk' style='left:3.2px;top:9.315000000000001px'></div><div class='t div' style='left:31.30000000000001px;top:4.015000000000001px;line-height:10.4px'>12 FURNISHINGS<br>SEATING</div><div class='t area' style='left:113.5px;top:8.365px;line-height:10.5px'>#Concierge</div><div class='t desc' style='left:318.6px;top:9.065000000000001px;line-height:9.1px'>Task Chair</div><div class='t desc' style='left:414.4px;top:1.3149999999999995px;line-height:8.8px'>Amicus Task, Single<br>Uph., High-Back, Stn<br>Mech. 3D Width and</div><div class='t desc dm' style='left:509.4px;top:4.8149999999999995px;line-height:8.8px'>16.5&quot;-20.5&quot;<br>Standard</div><div class='t qty' style='left:605.5px;top:8.615px'>1</div><svg class='abs' style='left:258.2px;top:0.9499999999999886px' width='16.8' height='25.2' viewBox='0 0 16.8 25.2'><rect width='16.8' height='25.2' fill='#f3f2ec'/><rect x='14' width='2.8' height='25.2' fill='#fbfbf8'/><path d='M3.8 3 Q4 0.5 8.4 0.5 Q12.8 0.5 13 3 L13.2 15 Q8.4 17 3.6 15 Z' fill='#121212'/><path d='M2 10.5 H4 V14 M14.8 10.5 H12.8 V14' stroke='#1a1a1a' stroke-width='1.4' fill='none'/><path d='M8.4 16 V20.5' stroke='#222' stroke-width='1.2'/><ellipse cx='8.4' cy='22' rx='7.2' ry='1.8' fill='none' stroke='#1c1c1c' stroke-width='1.1'/><path d='M2 22.5 L14.8 21.5 M4 21 L12.8 23' stroke='#1c1c1c' stroke-width='.9'/></svg></div><div class='abs' style='left:0;top:163.38px;width:645.6px;height:27.23px;overflow:hidden'><div class='abs' style='left:0;top:26.23px;width:645.6px;height:1px;background:#eeeeef'></div><div class='abs' style='left:13.199999999999989px;top:0;width:1px;height:27.23px;background:#efefef'></div><div class='abs' style='left:26.900000000000006px;top:0;width:1px;height:27.23px;background:#efefef'></div><div class='abs' style='left:104.60000000000002px;top:0;width:1px;height:27.23px;background:#efefef'></div><div class='abs' style='left:218.10000000000002px;top:0;width:1px;height:27.23px;background:#efefef'></div><div class='abs' style='left:314.20000000000005px;top:0;width:1px;height:27.23px;background:#efefef'></div><div class='abs' style='left:408.79999999999995px;top:0;width:1px;height:27.23px;background:#efefef'></div><div class='abs' style='left:505.5px;top:0;width:1px;height:27.23px;background:#efefef'></div><div class='abs' style='left:580.3px;top:0;width:1px;height:27.23px;background:#efefef'></div><div class='abs' style='left:634.2px;top:0;width:1px;height:27.23px;background:#efefef'></div><div class='chk' style='left:3.2px;top:9.315000000000001px'></div><div class='t div' style='left:31.30000000000001px;top:4.015000000000001px;line-height:10.4px'>12 FURNISHINGS<br>SEATING</div><div class='t area' style='left:113.5px;top:8.365px;line-height:10.5px'>#Lobby</div><div class='t desc' style='left:318.6px;top:9.065000000000001px;line-height:9.1px'>Lounge Chair</div><div class='t desc' style='left:414.4px;top:9.215px;line-height:8.8px'>Avery Chair</div><div class='t desc dm' style='left:509.4px;top:4.8149999999999995px;line-height:8.8px'>30&quot; W x 32&quot; D x<br>29&quot; H</div><div class='t qty' style='left:605.5px;top:8.615px'>4</div><svg class='abs' style='left:254.60000000000002px;top:3.719999999999999px' width='22.9' height='20.5' viewBox='0 0 22.9 20.5'><rect width='22.9' height='20.5' fill='#fff'/><path d='M1.2 2.5 Q1.5 0.6 5.5 0.8 L19.5 1.8 Q22.2 2.3 22.2 4.5 V15.8 H1.2 Z' fill='#d9d5c0'/><path d='M10 7.5 H21 V15 H10 Z' fill='#e9e6d8'/><path d='M3 3 Q7 4 10 7.5 V15' stroke='#c8c3ad' stroke-width='.8' fill='none'/><path d='M1.8 15.8 V19.8 M21.5 15.8 V19.8 M9.5 16 V19 H17' stroke='#8e8e8e' stroke-width='.8' fill='none'/></svg></div><div class='abs' style='left:0;top:190.61px;width:645.6px;height:27.23px;overflow:hidden'><div class='abs' style='left:0;top:26.23px;width:645.6px;height:1px;background:#eeeeef'></div><div class='abs' style='left:13.199999999999989px;top:0;width:1px;height:27.23px;background:#efefef'></div><div class='abs' style='left:26.900000000000006px;top:0;width:1px;height:27.23px;background:#efefef'></div><div class='abs' style='left:104.60000000000002px;top:0;width:1px;height:27.23px;background:#efefef'></div><div class='abs' style='left:218.10000000000002px;top:0;width:1px;height:27.23px;background:#efefef'></div><div class='abs' style='left:314.20000000000005px;top:0;width:1px;height:27.23px;background:#efefef'></div><div class='abs' style='left:408.79999999999995px;top:0;width:1px;height:27.23px;background:#efefef'></div><div class='abs' style='left:505.5px;top:0;width:1px;height:27.23px;background:#efefef'></div><div class='abs' style='left:580.3px;top:0;width:1px;height:27.23px;background:#efefef'></div><div class='abs' style='left:634.2px;top:0;width:1px;height:27.23px;background:#efefef'></div><div class='chk' style='left:3.2px;top:9.315000000000001px'></div><div class='t div' style='left:31.30000000000001px;top:4.015000000000001px;line-height:10.4px'>12 FURNISHINGS<br>SEATING</div><div class='t area' style='left:113.5px;top:3.115px;line-height:10.5px'>#Suite<br>#Women’s Washroom</div><div class='t desc' style='left:318.6px;top:9.065000000000001px;line-height:9.1px'>Vanity Chair</div><div class='t desc' style='left:414.4px;top:9.215px;line-height:8.8px'>Margaux Swivel Chair</div><div class='t desc dm' style='left:509.4px;top:4.8149999999999995px;line-height:8.8px'>23&quot; W x 23&quot; D x<br>33&quot; H</div><div class='t qty' style='left:605.5px;top:8.615px'>5</div><svg class='abs' style='left:259.4px;top:1.6899999999999693px' width='15.6' height='24.1' viewBox='0 0 15.6 24.1'><rect width='15.6' height='24.1' fill='#fff'/><path d='M1 11 Q0.6 1 6.3 0.6 Q11.5 1 12 10 Z' fill='#d3cfb9'/><rect x='1' y='9' width='13.8' height='11' rx='2' fill='#dad5c1'/><rect x='1' y='9' width='13.8' height='2' rx='1' fill='#e6e2d2'/><rect x='2.2' y='19.5' width='11.5' height='4.3' fill='#8c8c8e'/></svg></div><div class='abs' style='left:0;top:217.84px;width:645.6px;height:27.23px;overflow:hidden'><div class='abs' style='left:0;top:26.23px;width:645.6px;height:1px;background:#eeeeef'></div><div class='abs' style='left:13.199999999999989px;top:0;width:1px;height:27.23px;background:#efefef'></div><div class='abs' style='left:26.900000000000006px;top:0;width:1px;height:27.23px;background:#efefef'></div><div class='abs' style='left:104.60000000000002px;top:0;width:1px;height:27.23px;background:#efefef'></div><div class='abs' style='left:218.10000000000002px;top:0;width:1px;height:27.23px;background:#efefef'></div><div class='abs' style='left:314.20000000000005px;top:0;width:1px;height:27.23px;background:#efefef'></div><div class='abs' style='left:408.79999999999995px;top:0;width:1px;height:27.23px;background:#efefef'></div><div class='abs' style='left:505.5px;top:0;width:1px;height:27.23px;background:#efefef'></div><div class='abs' style='left:580.3px;top:0;width:1px;height:27.23px;background:#efefef'></div><div class='abs' style='left:634.2px;top:0;width:1px;height:27.23px;background:#efefef'></div><div class='chk' style='left:3.2px;top:9.315000000000001px'></div><div class='t div' style='left:31.30000000000001px;top:4.015000000000001px;line-height:10.4px'>12 FURNISHINGS<br>SEATING</div><div class='t area' style='left:113.5px;top:8.365px;line-height:10.5px'>#Suite</div><div class='t desc' style='left:318.6px;top:9.065000000000001px;line-height:9.1px'>Sofa</div><div class='t desc' style='left:414.4px;top:9.215px;line-height:8.8px'>Bella Bedroom Sofa</div><div class='t desc dm' style='left:509.4px;top:4.8149999999999995px;line-height:8.8px'>62&quot; W x 31&quot; D x<br>29&quot; H</div><div class='t qty' style='left:605.5px;top:8.615px'>1</div><svg class='abs' style='left:249.3px;top:3.5600000000000023px' width='36.2' height='18.9' viewBox='0 0 36.2 18.9'><rect width='36.2' height='18.9' fill='#fff'/><rect x='0.2' y='1.4' width='35.4' height='12.8' rx='2.5' fill='#e8dbc4'/><rect x='1.5' y='1.6' width='33' height='5' rx='2' fill='#efe4d1'/><path d='M0.5 8 H35.5' stroke='#dccfb6' stroke-width='.8'/><path d='M1.8 14 L1.5 19 M34 14 L34.3 19' stroke='#4a4a48' stroke-width='1.2'/><path d='M6 14 L6.2 17.2 M30 14 L29.8 17.2' stroke='#5a5a58' stroke-width='1'/></svg></div><div class='abs' style='left:0;top:245.07px;width:645.6px;height:27.23px;overflow:hidden'><div class='abs' style='left:0;top:26.23px;width:645.6px;height:1px;background:#eeeeef'></div><div class='abs' style='left:13.199999999999989px;top:0;width:1px;height:27.23px;background:#efefef'></div><div class='abs' style='left:26.900000000000006px;top:0;width:1px;height:27.23px;background:#efefef'></div><div class='abs' style='left:104.60000000000002px;top:0;width:1px;height:27.23px;background:#efefef'></div><div class='abs' style='left:218.10000000000002px;top:0;width:1px;height:27.23px;background:#efefef'></div><div class='abs' style='left:314.20000000000005px;top:0;width:1px;height:27.23px;background:#efefef'></div><div class='abs' style='left:408.79999999999995px;top:0;width:1px;height:27.23px;background:#efefef'></div><div class='abs' style='left:505.5px;top:0;width:1px;height:27.23px;background:#efefef'></div><div class='abs' style='left:580.3px;top:0;width:1px;height:27.23px;background:#efefef'></div><div class='abs' style='left:634.2px;top:0;width:1px;height:27.23px;background:#efefef'></div><div class='chk' style='left:3.2px;top:9.315000000000001px'></div><div class='t div' style='left:31.30000000000001px;top:4.015000000000001px;line-height:10.4px'>12 FURNISHINGS<br>SEATING</div><div class='t area' style='left:113.5px;top:8.365px;line-height:10.5px'>#Suite</div><div class='t desc' style='left:318.6px;top:9.065000000000001px;line-height:9.1px'>Pouf</div><div class='t desc' style='left:414.4px;top:4.8149999999999995px;line-height:8.8px'>Franny Round Pull-up<br>Ottoman</div><div class='t desc dm' style='left:509.4px;top:9.215px;line-height:8.8px'>22&quot; Dia. x 18&quot; H</div><div class='t qty' style='left:605.5px;top:8.615px'>2</div><svg class='abs' style='left:253.89999999999998px;top:3.3300000000000125px' width='25.6' height='21.6' viewBox='0 0 25.6 21.6'><rect width='25.6' height='21.6' fill='#fff'/><rect x='0.8' y='0.8' width='23.4' height='20.4' rx='4' fill='#6b6a60'/><rect x='0.8' y='0.8' width='23.4' height='4' rx='2' fill='#77766b'/><rect x='1.2' y='17' width='22.6' height='4' rx='2' fill='#5c5b52'/></svg></div><div class='abs' style='left:0;top:272.3px;width:645.6px;height:27.23px;overflow:hidden'><div class='abs' style='left:0;top:26.23px;width:645.6px;height:1px;background:#eeeeef'></div><div class='abs' style='left:13.199999999999989px;top:0;width:1px;height:27.23px;background:#efefef'></div><div class='abs' style='left:26.900000000000006px;top:0;width:1px;height:27.23px;background:#efefef'></div><div class='abs' style='left:104.60000000000002px;top:0;width:1px;height:27.23px;background:#efefef'></div><div class='abs' style='left:218.10000000000002px;top:0;width:1px;height:27.23px;background:#efefef'></div><div class='abs' style='left:314.20000000000005px;top:0;width:1px;height:27.23px;background:#efefef'></div><div class='abs' style='left:408.79999999999995px;top:0;width:1px;height:27.23px;background:#efefef'></div><div class='abs' style='left:505.5px;top:0;width:1px;height:27.23px;background:#efefef'></div><div class='abs' style='left:580.3px;top:0;width:1px;height:27.23px;background:#efefef'></div><div class='abs' style='left:634.2px;top:0;width:1px;height:27.23px;background:#efefef'></div><div class='chk' style='left:3.2px;top:9.315000000000001px'></div><div class='t div' style='left:31.30000000000001px;top:4.015000000000001px;line-height:10.4px'>12 FURNISHINGS<br>SEATING</div><div class='t area' style='left:113.5px;top:8.365px;line-height:10.5px'>#Men’s Washroom</div><div class='t desc' style='left:318.6px;top:9.065000000000001px;line-height:9.1px'>Bench</div><div class='t desc' style='left:414.4px;top:9.215px;line-height:8.8px'>Bellevue Bench</div><div class='t desc dm' style='left:509.4px;top:4.8149999999999995px;line-height:8.8px'>51.5&quot; W x 20&quot; D x<br>17.5&quot; H</div><div class='t qty' style='left:605.5px;top:8.615px'>1</div><svg class='abs' style='left:245.8px;top:1.1999999999999886px' width='41.8' height='24.3' viewBox='0 0 41.8 24.3'><defs><linearGradient id='bg1' x1='0' y1='0' x2='1' y2='0'><stop offset='0' stop-color='#a9a9a9'/><stop offset='1' stop-color='#cfcfcf'/></linearGradient></defs><rect width='41.8' height='24.3' fill='url(#bg1)'/><rect y='13.5' width='41.8' height='4' fill='#dedcd8'/><rect y='17' width='41.8' height='7.3' fill='#c9a272'/><rect x='2.5' y='7' width='38' height='5' rx='1' fill='#161616'/><path d='M4 12 L3.5 20 M39 12 L39.5 20 M13 12 L13.5 18 M30 12 L29.5 18' stroke='#222' stroke-width='.9'/></svg></div><div class='abs' style='left:0;top:299.53000000000003px;width:645.6px;height:27.23px;overflow:hidden'><div class='abs' style='left:0;top:26.23px;width:645.6px;height:1px;background:#eeeeef'></div><div class='abs' style='left:0;top:0;width:13.5px;height:27.23px;background:#c9ccd2'></div><div class='abs' style='left:13.199999999999989px;top:0;width:1px;height:27.23px;background:#efefef'></div><div class='abs' style='left:26.900000000000006px;top:0;width:1px;height:27.23px;background:#efefef'></div><div class='abs' style='left:104.60000000000002px;top:0;width:1px;height:27.23px;background:#efefef'></div><div class='abs' style='left:218.10000000000002px;top:0;width:1px;height:27.23px;background:#efefef'></div><div class='abs' style='left:314.20000000000005px;top:0;width:1px;height:27.23px;background:#efefef'></div><div class='abs' style='left:408.79999999999995px;top:0;width:1px;height:27.23px;background:#efefef'></div><div class='abs' style='left:505.5px;top:0;width:1px;height:27.23px;background:#efefef'></div><div class='abs' style='left:580.3px;top:0;width:1px;height:27.23px;background:#efefef'></div><div class='abs' style='left:634.2px;top:0;width:1px;height:27.23px;background:#efefef'></div><div class='chk' style='left:3.2px;top:9.315000000000001px'></div><div class='t div' style='left:31.30000000000001px;top:4.015000000000001px;line-height:10.4px'>12 FURNISHINGS<br>TABLES</div><div class='t area' style='left:113.5px;top:8.365px;line-height:10.5px'>#Concierge</div><div class='t desc' style='left:318.6px;top:9.065000000000001px;line-height:9.1px'>Console Table</div><div class='t desc' style='left:414.4px;top:9.215px;line-height:8.8px'>Custom Console Table</div><div class='t desc dm' style='left:509.4px;top:4.8149999999999995px;line-height:8.8px'>13&quot;D x 89&quot; Wx<br>36&quot;H</div><div class='t qty' style='left:605.5px;top:8.615px'>1</div><svg class='abs' style='left:253.89999999999998px;top:1.0699999999999932px' width='25.6' height='25.4' viewBox='0 0 25.6 25.4'><rect width='25.6' height='25.4' fill='#d6cbb1'/><circle cx='11' cy='6' r='4' fill='none' stroke='#d4a27a' stroke-width='2'/><rect x='9.5' y='4' width='5' height='6' fill='#3a3630'/><rect y='10.5' width='25.6' height='2.5' fill='#1a1a1a'/><rect y='13' width='25.6' height='3.5' fill='#c9bc9c'/><path d='M2 14.8 H23' stroke='#2a2a2a' stroke-width='.8' stroke-dasharray='2 1.5'/><rect y='16.5' width='25.6' height='3' fill='#161616'/><path d='M0 19.5 H25.6 V25.4 H5 Z' fill='#ececec'/><path d='M0 19.5 L5 25.4 H0 Z' fill='#2a2a2a'/></svg></div><div class='abs' style='left:0;top:326.76px;width:645.6px;height:27.23px;overflow:hidden'><div class='abs' style='left:0;top:26.23px;width:645.6px;height:1px;background:#eeeeef'></div><div class='abs' style='left:0;top:0;width:645.6px;height:27.23px;background:#f5f5f6'></div><div class='abs' style='left:13.199999999999989px;top:0;width:1px;height:27.23px;background:#efefef'></div><div class='abs' style='left:26.900000000000006px;top:0;width:1px;height:27.23px;background:#efefef'></div><div class='abs' style='left:104.60000000000002px;top:0;width:1px;height:27.23px;background:#efefef'></div><div class='abs' style='left:218.10000000000002px;top:0;width:1px;height:27.23px;background:#efefef'></div><div class='abs' style='left:314.20000000000005px;top:0;width:1px;height:27.23px;background:#efefef'></div><div class='abs' style='left:408.79999999999995px;top:0;width:1px;height:27.23px;background:#efefef'></div><div class='abs' style='left:505.5px;top:0;width:1px;height:27.23px;background:#efefef'></div><div class='abs' style='left:580.3px;top:0;width:1px;height:27.23px;background:#efefef'></div><div class='abs' style='left:634.2px;top:0;width:1px;height:27.23px;background:#efefef'></div><div class='chk' style='left:3.2px;top:9.315000000000001px'></div><div class='t div' style='left:31.30000000000001px;top:4.015000000000001px;line-height:10.4px'>12 FURNISHINGS<br>SEATING</div><div class='t area' style='left:113.5px;top:8.365px;line-height:10.5px'>#Concierge</div><div class='t desc' style='left:318.6px;top:9.065000000000001px;line-height:9.1px'>Mobile Pedestal</div><div class='t desc' style='left:414.4px;top:1.3149999999999995px;line-height:8.8px'>Dossier Mobile<br>Pedestal, Horizontal<br>Lock</div><div class='t desc dm' style='left:509.4px;top:9.215px;line-height:8.8px'>20&quot; D x 18&quot; W x 28&quot; H</div><div class='t qty' style='left:605.5px;top:8.615px'></div><svg class='abs' style='left:245.3px;top:4.039999999999964px' width='42.1' height='14' viewBox='0 0 42.1 14'><rect width='42.1' height='14' fill='#fff'/><rect x='8' y='3.5' width='15.5' height='10.5' fill='#d3c6a4'/><rect x='8' y='3.5' width='15.5' height='2' fill='#dfd4b8'/><circle cx='31.7' cy='6.5' r='5.2' fill='#3b3b3a'/></svg></div></div><div class='abs' style='left:215.5px;top:90px;width:1px;height:401.5px;background:#ececee'></div><div class='abs' style='left:229.7px;top:486.5px;width:631.9px;height:5px;background:#f3f3f4;border-radius:0 0 5px 0'></div><div class='chk' style='left:219.2px;top:481.5px'></div><div class='abs' style='left:244px;top:486px;width:14.8px;height:5.5px;background:#cfd1d6;border-radius:3px'></div><div class='abs' style='left:216px;top:491px;width:645.6px;height:1px;background:#e4e4e6'></div><div class='abs' style='left:855.2px;top:145.3px;width:6.6px;height:346px;background:#f1f1f3'></div><div class='abs' style='left:855.2px;top:145.3px;width:6.6px;height:215px;background:#cdd0d5;border-radius:3px'></div><div class='abs' style='left:315.4px;top:227.7px;width:5.6px;height:21.7px;background:#d3d5da;border-radius:3px'></div><div class='abs' style='left:876px;top:4.8px;width:5px;height:499px;background:#d2d3d8;border-radius:2px 0 0 0'></div><div class='abs' style='left:773.6px;top:469.3px;width:91.4px;height:26px;background:#fff;border-radius:13px;box-shadow:0 1px 5px rgba(0,0,0,.18)'></div><svg class='abs' style='left:788px;top:476px' width='11' height='10' viewBox='0 0 11 10'><path d='M5.5 .8 C8.5 .8 10.3 2.4 10.3 4.3 C10.3 6.2 8.5 7.6 5.5 7.6 L3.2 9.3 L3.5 7.2 C1.8 6.6 .7 5.5 .7 4.3 C.7 2.4 2.5 .8 5.5 .8 Z' fill='none' stroke='#c9895c' stroke-width='.9'/><circle cx='3.7' cy='4.3' r='.6' fill='#c9895c'/><circle cx='5.5' cy='4.3' r='.6' fill='#c9895c'/><circle cx='7.3' cy='4.3' r='.6' fill='#c9895c'/></svg><div class='t' style='left:803.4px;top:476px;font-family:"Liberation Serif",serif;font-size:10.2px;font-weight:bold;color:#c9895c'>Live Help</div></body></html>
